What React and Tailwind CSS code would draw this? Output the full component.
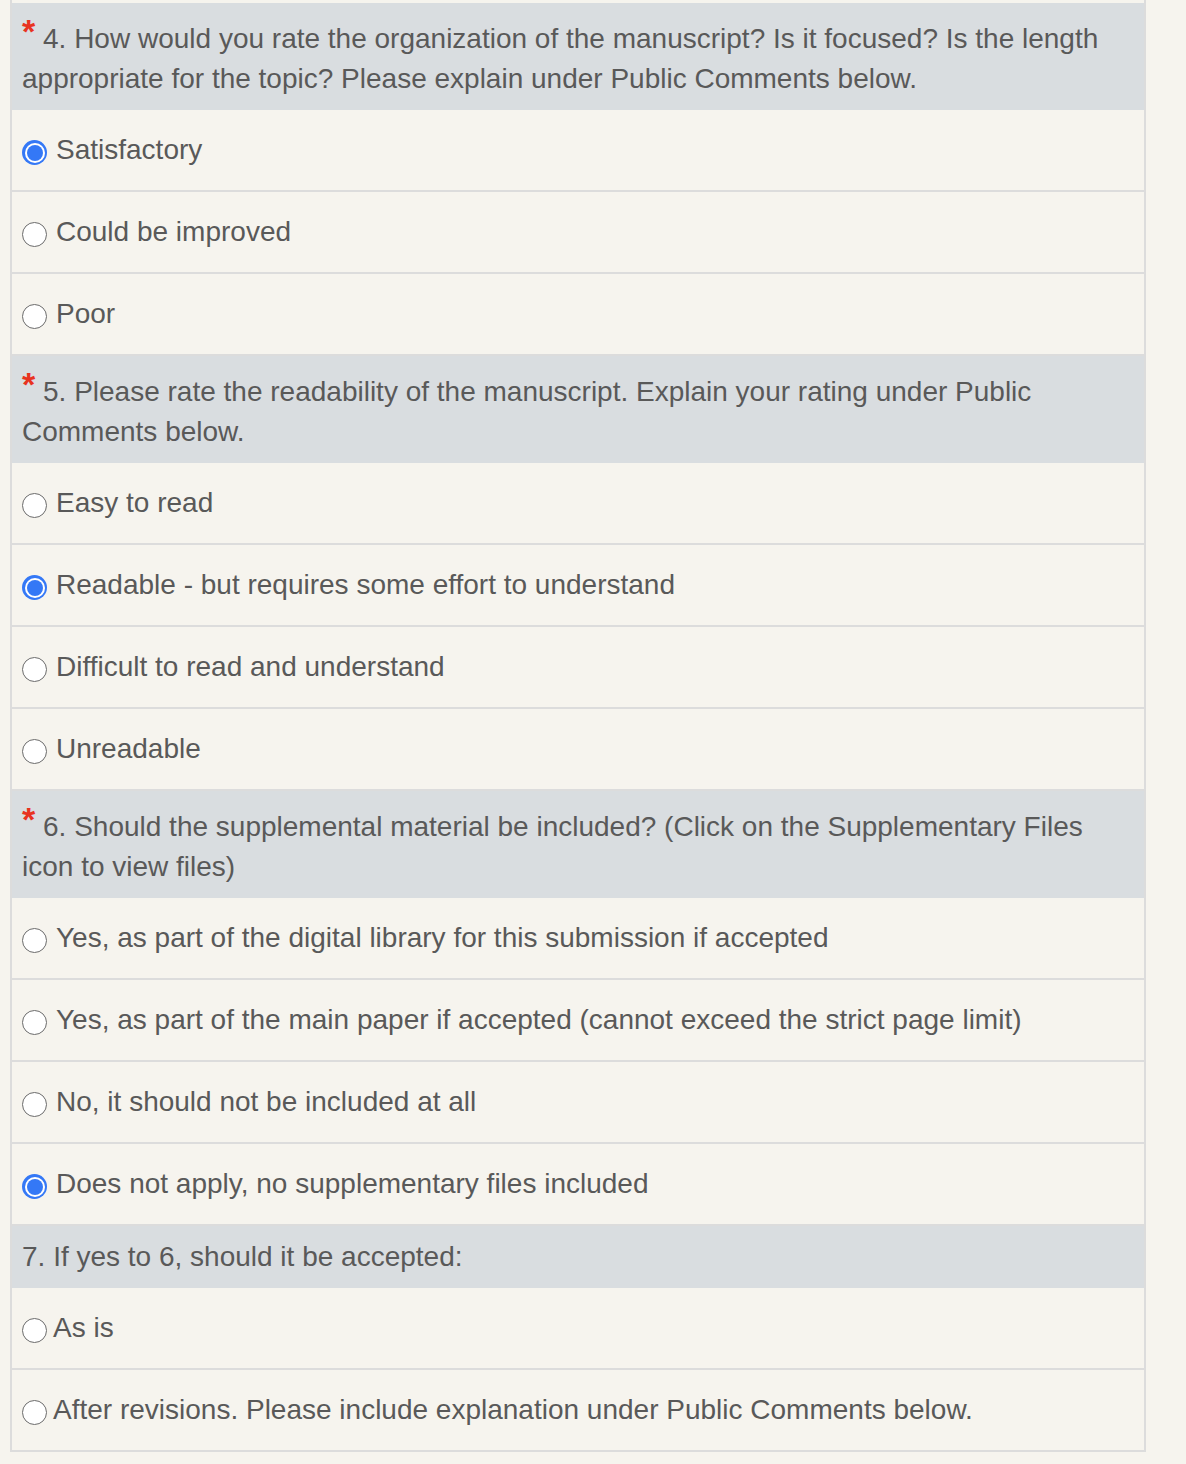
const QUESTIONS = [
  {
    id: 4,
    required: true,
    text: '4. How would you rate the organization of the manuscript? Is it focused? Is the length appropriate for the topic? Please explain under Public Comments below.',
    selected: 0,
    options: ['Satisfactory', 'Could be improved', 'Poor'],
  },
  {
    id: 5,
    required: true,
    text: '5. Please rate the readability of the manuscript. Explain your rating under Public Comments below.',
    selected: 1,
    options: [
      'Easy to read',
      'Readable - but requires some effort to understand',
      'Difficult to read and understand',
      'Unreadable',
    ],
  },
  {
    id: 6,
    required: true,
    text: '6. Should the supplemental material be included? (Click on the Supplementary Files icon to view files)',
    selected: 3,
    options: [
      'Yes, as part of the digital library for this submission if accepted',
      'Yes, as part of the main paper if accepted (cannot exceed the strict page limit)',
      'No, it should not be included at all',
      'Does not apply, no supplementary files included',
    ],
  },
  {
    id: 7,
    required: false,
    text: '7. If yes to 6, should it be accepted:',
    selected: -1,
    tight: true,
    options: ['As is', 'After revisions. Please include explanation under Public Comments below.'],
  },
];

function Radio({ checked }) {
  if (checked) {
    return (
      <span className="mt-[5px] flex h-[25px] w-[25px] shrink-0 items-center justify-center rounded-full bg-[#3478f6]">
        <span className="flex h-[20px] w-[20px] items-center justify-center rounded-full bg-white">
          <span className="h-[16px] w-[16px] rounded-full bg-[#3478f6]" />
        </span>
      </span>
    );
  }
  return (
    <span className="mt-[5px] h-[25px] w-[25px] shrink-0 rounded-full border-[1.5px] border-[#6b6b6b] bg-white" />
  );
}

function Question({ q }) {
  return (
    <>
      <div
        className={`bg-[#d9dde0] px-[10px] leading-[40px] ${
          q.required ? 'pt-[16px] pb-[11px]' : 'py-[11px]'
        }`}
      >
        {q.required && (
          <span className="relative -top-[5px] text-[34px] font-bold leading-[0] text-[#e8331f]">*</span>
        )}
        {q.required && ' '}
        {q.text}
      </div>
      {q.options.map((opt, i) => (
        <label
          key={opt}
          className={`flex h-[82px] items-center border-b-2 border-[#dcdcdc] px-[10px] ${
            q.tight ? 'gap-[6px]' : 'gap-[9px]'
          }`}
        >
          <Radio checked={i === q.selected} />
          <span>{opt}</span>
        </label>
      ))}
    </>
  );
}

export default function App() {
  return (
    <div
      className="min-h-[1464px] w-[1186px] bg-[#f6f4ee] text-[28px] text-[#595959]"
      style={{ fontFamily: '"Liberation Sans", Arial, sans-serif' }}
    >
      <div className="ml-[10px] w-[1136px] border-x-2 border-[#dcdcdc]">
        <div className="h-[3px]" />
        {QUESTIONS.map((q) => (
          <Question key={q.id} q={q} />
        ))}
      </div>
    </div>
  );
}
